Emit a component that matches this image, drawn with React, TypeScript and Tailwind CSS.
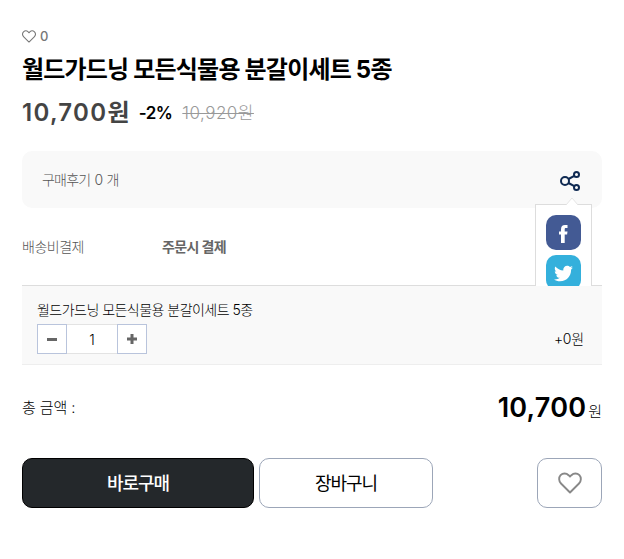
import { FaTwitter } from "react-icons/fa";

function HeartIcon({ className, strokeWidth }: { className: string; strokeWidth: number }) {
  return (
    <svg viewBox="0 0 24 22" fill="none" stroke="currentColor" strokeWidth={strokeWidth} strokeLinejoin="round" className={className}>
      <path d="M12 20.500 3 11.500C.6 9 .6 5.400 2.600 3.200c2.200-2.200 5.700-2.200 8 0L12 4.600l1.400-1.400c2.300-2.200 5.800-2.200 8 0 2 2.200 2 5.800-.4 8.300z" />
    </svg>
  );
}

function ShareIcon() {
  return (
    <svg viewBox="0 0 20 20" fill="none" stroke="#0f2a52" strokeWidth="2" className="mt-[2px] h-5 w-5">
      <circle cx="5" cy="10" r="4" />
      <circle cx="16.500" cy="3.500" r="2.500" />
      <circle cx="16.500" cy="16.500" r="2.500" />
      <path d="M8.500 8 14.300 4.800M8.500 12l5.800 3.200" />
    </svg>
  );
}

function SharePopup() {
  return (
    <div className="absolute top-[46px] right-[10px] h-[89px] w-[57px] overflow-hidden">
      <div className="mt-[7px] flex h-[120px] flex-col items-center gap-[5px] border border-[#ddd] bg-white pt-[10px]">
        <div className="flex h-[35px] w-[35px] items-center justify-center rounded-[10px] bg-[#435a94]">
          <svg viewBox="0 0 9 18" fill="#fff" className="mt-[2px] h-[18px] w-[9px]">
            <path d="M2 18V9.500H0v-3h2V4.400C2 1.500 3.400 0 6 0h2.500v3H7C6 3 5.700 3.500 5.700 4.400v2.100h2.800l-.4 3H5.700V18z" />
          </svg>
        </div>
        <div className="flex h-[35px] w-[35px] items-center justify-center rounded-[10px] bg-[#34b0dc] text-white">
          <FaTwitter className="mt-[2px] h-[19px] w-[19px]" />
        </div>
      </div>
      <svg viewBox="0 0 14 8" className="absolute top-0 left-[30px] h-2 w-[14px]">
        <path d="M1 8 7 1l6 7" fill="#fff" stroke="#e5e5e5" />
      </svg>
    </div>
  );
}

export default function App() {
  return (
    <div className="h-[559px] w-[624px] overflow-hidden bg-white px-[22px] pt-[26px] font-['Inter','Noto_Sans_CJK_KR',sans-serif] text-black">
      {/* Product heading */}
      <div className="flex h-5 items-center text-[#777]">
        <HeartIcon className="h-[13px] w-[14px]" strokeWidth={1.8} />
        <span className="mt-[2px] ml-[4px] text-[13px] font-medium">0</span>
      </div>
      <h1 className="flex h-[47px] items-center whitespace-nowrap text-[24px] font-bold tracking-[-0.8px]">
        월드가드닝 모든식물용 분갈이세트 5종
      </h1>
      <div className="flex h-[40px] items-center whitespace-nowrap">
        <span className="text-[24px] font-semibold text-[#444]">
          <span className="tracking-[1.3px]">10,700</span>
          <span className="tracking-[-0.8px]">원</span>
        </span>
        <span className="mt-[2px] ml-[10px] text-[17px] font-semibold tracking-[-0.5px]">-2%</span>
        <span className="mt-[2px] ml-[10px] text-[17px] font-light tracking-[0.48px] text-[#999] line-through">10,920원</span>
      </div>

      {/* Reviews and sharing */}
      <div className="relative mt-[18px] flex h-[57px] items-center justify-between rounded-[10px] bg-[#f9f9f9] pr-[22px] pl-5">
        <span className="text-[14px] font-light tracking-[-0.8px] text-[#555]">
          구매후기 <span className="inline-block w-[10px] text-center">0</span> 개
        </span>
        <ShareIcon />
        <SharePopup />
      </div>
      <div className="flex h-[77px] items-center text-[14px] text-[#666]">
        <span className="w-[140px] font-light tracking-[-0.5px] text-[#555]">배송비결제</span>
        <span className="font-bold tracking-[-0.6px]">주문시 결제</span>
      </div>

      {/* Selected option */}
      <div className="h-[80px] border-t border-b border-t-[#ddd] border-b-[#eee] bg-[#f9f9f9] pt-[13px] pr-[18px] pl-[15px]">
        <p className="h-[25px] text-[14px] leading-[21px] font-light tracking-[-0.53px]">월드가드닝 모든식물용 분갈이세트 5종</p>
        <div className="flex items-center justify-between">
          <div className="flex h-[30px] w-[110px] bg-white">
            <button className="flex w-[30px] items-center justify-center border border-[#b9c4dc]">
              <span className="h-[3px] w-[10px] bg-[#666]" />
            </button>
            <span className="flex flex-1 items-center justify-center border-y border-[#e3e3e3] text-[14px] font-light">1</span>
            <button className="flex w-[30px] items-center justify-center border border-[#b9c4dc]">
              <svg viewBox="0 0 10 10" stroke="#666" strokeWidth="3" className="h-[10px] w-[10px]">
                <path d="M0 5h10M5 0v10" />
              </svg>
            </button>
          </div>
          <span className="mb-[2px] text-[14px] font-light tracking-[-0.2px]">+0원</span>
        </div>
      </div>

      {/* Total */}
      <div className="flex h-[93px] items-center justify-between pb-[7px]">
        <span className="text-[15px] font-light tracking-[-0.1px]">총 금액 :</span>
        <div className="flex items-baseline">
          <span className="text-[27px] font-semibold tracking-[0.2px]">10,700</span>
          <span className="ml-[2px] text-[15px] font-light">원</span>
        </div>
      </div>

      {/* Purchase actions */}
      <div className="flex h-[50px] text-[18px] tracking-[-1px]">
        <button className="w-[232px] rounded-[10px] border border-black bg-[#24282b] font-medium text-white">바로구매</button>
        <button className="ml-[5px] w-[174px] rounded-[10px] border border-[#9ca6b8]">장바구니</button>
        <button className="ml-auto flex w-[65px] items-center justify-center rounded-[10px] border border-[#9ca6b8] text-[#888]">
          <HeartIcon className="h-[22px] w-6" strokeWidth={1.9} />
        </button>
      </div>
    </div>
  );
}
